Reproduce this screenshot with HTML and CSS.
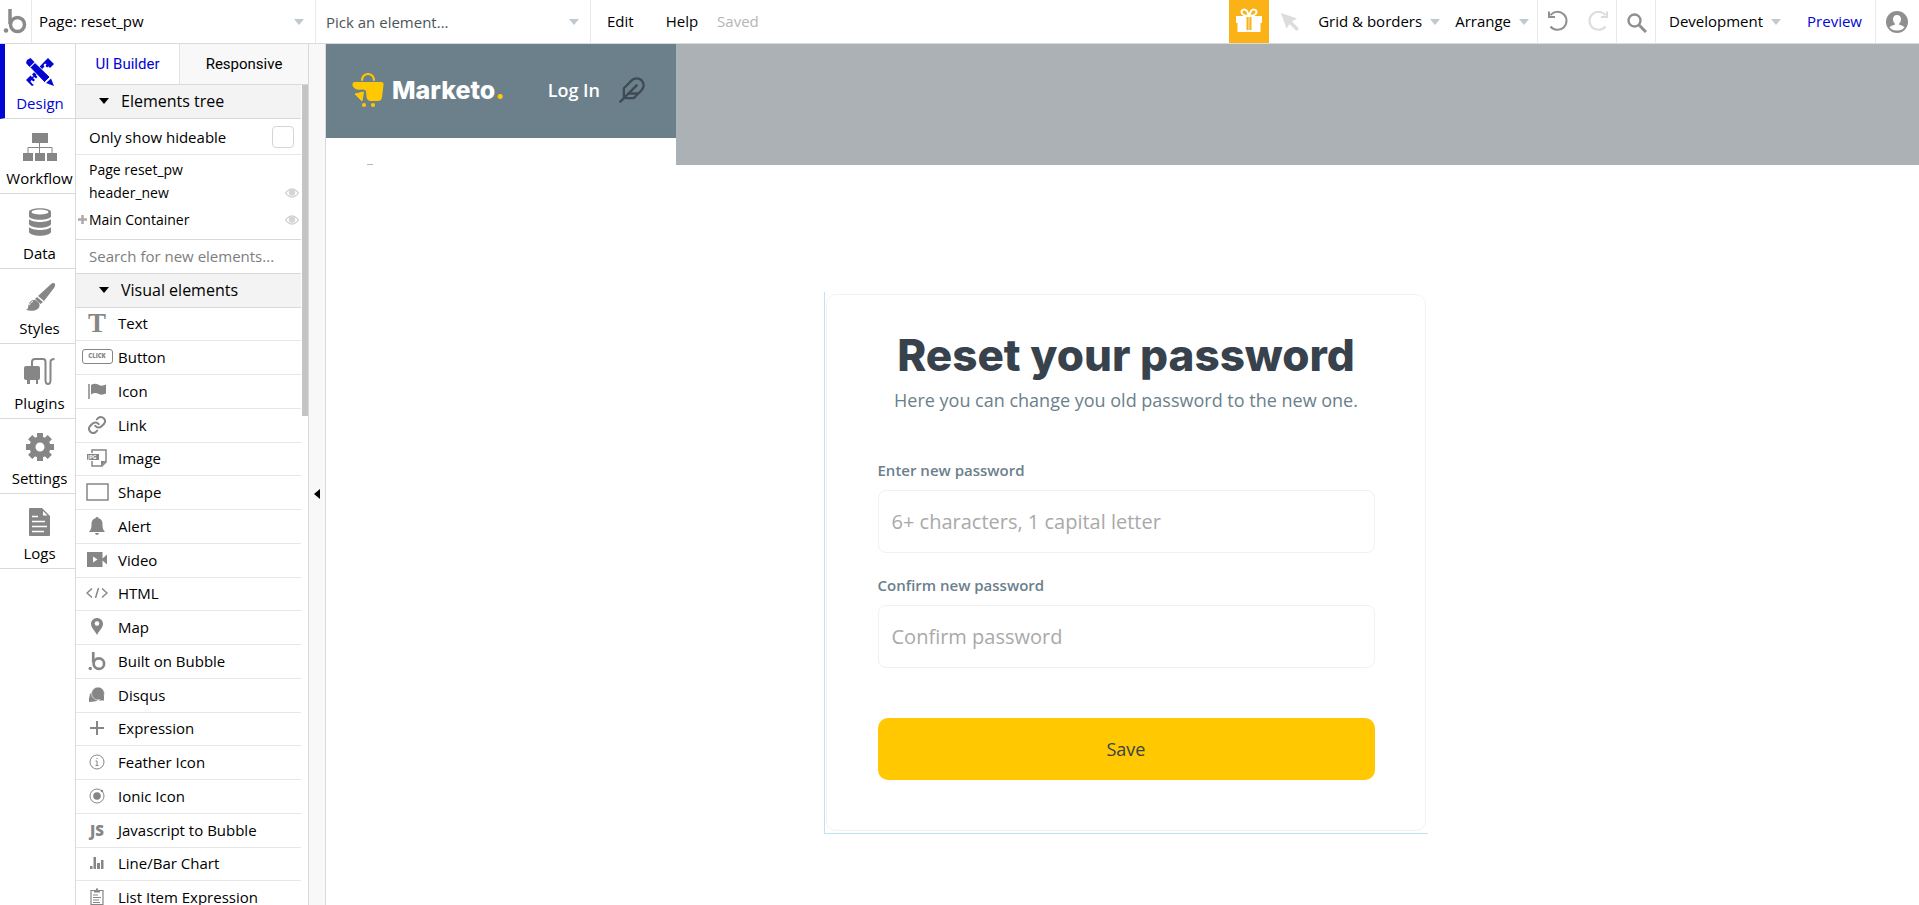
FILE: index.html
```html
<!DOCTYPE html>
<html lang="en">
<head>
    <meta charset="UTF-8">
    <meta name="viewport" content="width=device-width, initial-scale=1.0">
    <title>reset_pw | Bubble Editor</title>
    <link rel="stylesheet" href="styles.css">
</head>
<body>
    <header class="topbar">
        <a class="brand" href="#" aria-label="Home">
            <svg width="24" height="26" viewBox="0 0 24 26"><circle cx="3" cy="22.500" r="2.300" fill="#8a8a8a"/><path d="M7 1v15" stroke="#8a8a8a" stroke-width="3.500" fill="none"/><circle cx="14.500" cy="16.500" r="7" fill="none" stroke="#8a8a8a" stroke-width="3.500"/></svg>
        </a>
        <div class="picker page-picker">
            <select aria-label="Page"><option>Page: reset_pw</option></select>
        </div>
        <div class="picker element-picker">
            <select aria-label="Element"><option>Pick an element...</option></select>
        </div>
        <nav class="menu">
            <button type="button">Edit</button>
            <button type="button">Help</button>
            <span class="saved">Saved</span>
        </nav>
        <div class="tools">
            <button type="button" class="gift" aria-label="Gift">
                <svg width="26" height="24" viewBox="0 0 26 24"><path d="M0 8h26v7h-1.500v9H1.500v-9H0z" fill="#fff"/><path d="M13 8C9 8 5.500 6.500 5.500 4S9 .5 11 3l2 5 2-5c2-2.500 5.500-1.500 5.500 1S17 8 13 8z" fill="none" stroke="#fff" stroke-width="2"/><path d="M10.500 9h5v13h-5z" fill="#fbb216"/><path d="M12 8h2v15h-2z" fill="#fff" opacity=".35"/></svg>
            </button>
            <button type="button" class="pointer" aria-label="Pointer">
                <svg width="20" height="20" viewBox="0 0 20 20"><path d="M1 1l16 5.500-5 3L19 16.500 16.500 19 9.500 12 6.500 16.500z" fill="#dcdcdc"/></svg>
            </button>
            <button type="button" class="drop">Grid &amp; borders</button>
            <button type="button" class="drop">Arrange</button>
            <div class="history">
                <button type="button" aria-label="Undo">
                    <svg width="22" height="22" viewBox="0 0 22 22"><path d="M3.500 5.200A9 9 0 1 1 3.500 16.500" fill="none" stroke="#8f8f8f" stroke-width="2"/><path d="M2 1.500V7h6" fill="none" stroke="#8f8f8f" stroke-width="2"/></svg>
                </button>
                <button type="button" aria-label="Redo">
                    <svg width="22" height="22" viewBox="0 0 22 22"><path d="M18.500 5.200A9 9 0 1 0 18.500 16.500" fill="none" stroke="#dcdcdc" stroke-width="2"/><path d="M20 1.500V7h-6" fill="none" stroke="#dcdcdc" stroke-width="2"/></svg>
                </button>
            </div>
            <button type="button" class="search" aria-label="Search">
                <svg width="20" height="20" viewBox="0 0 20 20"><circle cx="7.500" cy="7.500" r="6" fill="none" stroke="#8f8f8f" stroke-width="2.400"/><path d="M12 12l7 7" stroke="#8f8f8f" stroke-width="3"/></svg>
            </button>
            <button type="button" class="drop version">Development</button>
            <a class="preview" href="#">Preview</a>
            <button type="button" class="account" aria-label="Account">
                <svg width="22" height="22" viewBox="0 0 22 22"><circle cx="11" cy="11" r="11" fill="#8f8f8f"/><path d="M11 4c2.600 0 4 1.800 4 4.200 0 1.800-.8 3.300-1.800 4.200v1.300c2.500.6 4.300 1.300 5.300 2.600A9 9 0 0 1 11 19.500a9 9 0 0 1-7.500-3.200c1-1.300 2.800-2 5.300-2.600v-1.300C7.800 11.500 7 10 7 8.200 7 5.800 8.400 4 11 4z" fill="#fff"/></svg>
            </button>
        </div>
    </header>

    <div class="workspace">
        <nav class="sidenav">
            <a href="#" class="active">
                <svg width="28" height="28" viewBox="0 0 28 28"><g fill="#0205d3"><path d="M22 0l6 6-4 4-1.500-1.500-1.500 1L19.500 8l1-1.500-1.500-1L17.500 7l1 1.500L10 17.500l1.500 1.500-1.500 1.500L8.500 19 7 20l2 2-1.500 1.500L5.500 22l-1 1.500L6.500 26l1.500 1-2 1L0 22l4.500-4.500L6 19l1.500-1L6 16.500 18 4z"/><path d="M4.500 0l4 4-5 5L0 5 1 2z"/><path d="M9 4.500L24 19l-5.500 5.500L4 9.500z" stroke="#fff"/><path d="M25 20.500l3 7.500-8-3z"/></g></svg>
                <span>Design</span>
            </a>
            <a href="#">
                <svg width="34" height="28" viewBox="0 0 34 28"><g fill="#868686"><path d="M9 0h16v10H9zM0 20h10v8H0zM12 20h10v8H12zM24 20h10v8H24z"/><path d="M16.500 10v10M5 20v-5.500h24V20" fill="none" stroke="#868686"/></g></svg>
                <span>Workflow</span>
            </a>
            <a href="#">
                <svg width="22" height="28" viewBox="0 0 22 28"><g fill="#868686"><path d="M0 4v4c0 5 22 5 22 0V4c0-5-22-5-22 0zM0 11v5c2 5 20 5 22 0v-5c-3 4-19 4-22 0zM0 19v5c2 5 20 5 22 0v-5c-3 4-19 4-22 0z"/></g><ellipse cx="11" cy="4" rx="8.500" ry="2.500" fill="#fff"/></svg>
                <span>Data</span>
            </a>
            <a href="#">
                <svg width="30" height="28" viewBox="0 0 30 28"><g fill="#868686"><path d="M29 0c2 1 1 3 0 5L19 18l-6-5L25 2c1.500-1.500 3-2.500 4-2zM12 14l6 5-2.500 2-5.500-5z"/><path d="M9 17c3 0 6 3 5.500 6C14 27 8 29 1 27c2-1 2-2 2.500-5 .5-3 3-5 5.500-5z"/></g><path d="M4.500 22c.5-2 2-3 3.500-3.500" stroke="#fff" fill="none"/></svg>
                <span>Styles</span>
            </a>
            <a href="#">
                <svg width="31" height="28" viewBox="0 0 31 28"><path d="M8 8V4q0-3 3-3h8q2.500 0 2.500 3v18q0 4 2.500 4t2.500-4V4q0-3 4-3" fill="none" stroke="#868686" stroke-width="2"/><path d="M2 8h12q2 0 2 2v10q0 2-2 2v4h-2v-4H6v4H3v-4q-3 0-3-2V10q0-2 2-2z" fill="#868686"/></svg>
                <span>Plugins</span>
            </a>
            <a href="#">
                <svg width="28" height="28" viewBox="0 0 28 28"><circle cx="14" cy="14" r="7.500" fill="none" stroke="#868686" stroke-width="6"/><g stroke="#868686" stroke-width="6"><path d="M14 0v5M14 23v5M0 14h5M23 14h5M4.200 4.200l3.500 3.500M20.300 20.300l3.500 3.500M4.200 23.800l3.500-3.500M20.300 7.700l3.500-3.500"/></g></svg>
                <span>Settings</span>
            </a>
            <a href="#">
                <svg width="21" height="28" viewBox="0 0 21 28"><path d="M1 0h12l8 8v19q0 1-1 1H1q-1 0-1-1V1q0-1 1-1z" fill="#868686"/><path d="M14 3v4.500h4.500z" fill="#fff"/><path d="M3 8.500h6M3 13.500h13M3 18.500h15M3 23.500h12" stroke="#fff" stroke-width="1.500"/></svg>
                <span>Logs</span>
            </a>
        </nav>

        <aside class="panel">
            <div class="tabs">
                <button type="button" class="tab active">UI Builder</button>
                <button type="button" class="tab">Responsive</button>
            </div>
            <div class="panel-scroll">
                <div class="panel-body">
                    <button type="button" class="section">Elements tree</button>
                    <div class="hideable">
                        <label for="hideable">Only show hideable</label>
                        <input type="checkbox" id="hideable">
                    </div>
                    <ul class="tree">
                        <li>Page reset_pw</li>
                        <li>header_new
                            <svg class="eye" width="14" height="10" viewBox="0 0 14 10"><path d="M.5 5Q7-3 13.500 5 7 13 .5 5z" fill="none" stroke="#d5d5d5" stroke-width="1.300"/><circle cx="7" cy="4.500" r="3.200" fill="#d5d5d5"/></svg>
                        </li>
                        <li class="parent">
                            <svg class="plus" width="9" height="9" viewBox="0 0 9 9"><path d="M4.500 0v9M0 4.500h9" stroke="#aaa" stroke-width="2.500"/></svg>
                            Main Container
                            <svg class="eye" width="14" height="10" viewBox="0 0 14 10"><path d="M.5 5Q7-3 13.500 5 7 13 .5 5z" fill="none" stroke="#d5d5d5" stroke-width="1.300"/><circle cx="7" cy="4.500" r="3.200" fill="#d5d5d5"/></svg>
                        </li>
                    </ul>
                    <input class="find" type="text" aria-label="Search for new elements" placeholder="Search for new elements...">
                    <button type="button" class="section">Visual elements</button>
                    <ul class="elements">
                        <li><span class="icon icon-t">T</span>Text</li>
                        <li><span class="icon"><span class="icon-click">CLICK</span></span>Button</li>
                        <li><span class="icon"><svg width="18" height="16" viewBox="0 0 18 16"><path d="M1 1v15" stroke="#868686" stroke-width="1.500"/><path d="M3 2q4-2.500 8 0 3 1.500 7-.5v9q-4 2-7 .5-4-2-8 .5z" fill="#868686"/></svg></span>Icon</li>
                        <li><span class="icon"><svg width="20" height="20" viewBox="0 0 24 24"><g fill="none" stroke="#868686" stroke-width="2.400" stroke-linecap="round"><path d="M10 13a5 5 0 0 0 7.500.5l3-3a5 5 0 0 0-7-7l-1.700 1.700"/><path d="M14 11a5 5 0 0 0-7.500-.5l-3 3a5 5 0 0 0 7 7l1.700-1.700"/></g></svg></span>Link</li>
                        <li><span class="icon"><svg width="20" height="18" viewBox="0 0 20 18"><path d="M5 4V1h14v12l-4 4H5v-5" fill="none" stroke="#868686" stroke-width="1.500"/><path d="M0 5h12v6H0zM14 12h5l-5 5z" fill="#868686"/><text x="1" y="10" class="jpg">JPG</text></svg></span>Image</li>
                        <li><span class="icon"><svg width="23" height="18" viewBox="0 0 23 18"><path d="M1 1h21v16H1z" fill="none" stroke="#868686" stroke-width="1.500"/></svg></span>Shape</li>
                        <li><span class="icon"><svg width="16" height="18" viewBox="0 0 16 18"><path d="M8 0q1.300 0 1.500 1.300C12.500 2 13.500 4.500 13.500 7c0 4 .5 5.500 2.500 8H0c2-2.500 2.500-4 2.500-8 0-2.500 1-5 4-5.700Q6.700 0 8 0zM6 16h4q-.5 2-2 2t-2-2z" fill="#868686"/></svg></span>Alert</li>
                        <li><span class="icon"><svg width="20" height="15" viewBox="0 0 20 15"><path d="M0 0h15.500v15H0zM15.500 6.500L20 2.500v10l-4.500-4z" fill="#868686"/><path d="M6 4.500v6l4.500-3z" fill="#fff"/></svg></span>Video</li>
                        <li><span class="icon"><svg width="22" height="12" viewBox="0 0 22 12"><path d="M6 1.500L1 6l5 4.500M16 1.500L21 6l-5 4.500M12.500 1l-3 10" fill="none" stroke="#868686" stroke-width="1.500"/></svg></span>HTML</li>
                        <li><span class="icon"><svg width="12" height="17" viewBox="0 0 12 17"><path d="M6 0a5.800 5.800 0 0 1 6 6c0 3.500-4 7-6 11-2-4-6-7.500-6-11a5.800 5.800 0 0 1 6-6z" fill="#868686"/><circle cx="6" cy="5.500" r="2.300" fill="#fff"/></svg></span>Map</li>
                        <li><span class="icon"><svg width="18" height="20" viewBox="0 0 24 26"><circle cx="3" cy="23" r="2.300" fill="#868686"/><path d="M7 1v14" stroke="#868686" stroke-width="3.600"/><circle cx="14.500" cy="16.500" r="7" fill="none" stroke="#868686" stroke-width="3.600"/></svg></span>Built on Bubble</li>
                        <li><span class="icon"><svg width="16" height="15" viewBox="0 0 16 15"><circle cx="5.500" cy="9.500" r="5" fill="#868686"/><path d="M0 15v-5l5 4.500z" fill="#868686"/><circle cx="9" cy="6.500" r="6.500" fill="#868686" stroke="#fff" stroke-width=".6"/><path d="M15 8v5.500h-5z" fill="#868686"/></svg></span>Disqus</li>
                        <li><span class="icon"><svg width="14" height="14" viewBox="0 0 14 14"><path d="M7 0v14M0 7h14" stroke="#868686" stroke-width="2"/></svg></span>Expression</li>
                        <li><span class="icon"><svg width="16" height="16" viewBox="0 0 16 16"><circle cx="8" cy="8" r="7" fill="none" stroke="#868686"/><path d="M6.500 7H8v4M6.500 11.500h3M7.500 4.500h1.200" fill="none" stroke="#868686"/></svg></span>Feather Icon</li>
                        <li><span class="icon"><svg width="16" height="16" viewBox="0 0 16 16"><circle cx="8" cy="8" r="7" fill="none" stroke="#868686"/><circle cx="8" cy="8" r="3.800" fill="#868686"/><circle cx="13" cy="3" r="1.200" fill="#868686"/></svg></span>Ionic Icon</li>
                        <li><span class="icon icon-js">JS</span>Javascript to Bubble</li>
                        <li><span class="icon"><svg width="14" height="12" viewBox="0 0 14 12"><path d="M0 9h2.500v3H0zM3.500 0H6v12H3.500zM7 6h3v6H7zM11 3h2.500v9H11z" fill="#868686"/></svg></span>Line/Bar Chart</li>
                        <li><span class="icon"><svg width="14" height="17" viewBox="0 0 14 17"><path d="M4 2.500H1v14h12v-14h-3" fill="none" stroke="#868686" stroke-width="1.200"/><path d="M4 4.500V2h2q0-2 1-2t1 2h2v2.500zM3 6.500h5v1H3zM3 9h8v1H3zM3 11.500h6v1H3zM3 14h7v1H3z" fill="#868686"/></svg></span>List Item Expression</li>
                    </ul>
                </div>
                <div class="thumb"></div>
            </div>
        </aside>

        <button type="button" class="collapse" aria-label="Collapse panel"></button>

        <main class="canvas">
            <div class="page-header">
                <div class="header-new">
                    <div class="header-bar">
                        <a class="logo" href="#">
                            <svg width="32" height="36" viewBox="0 0 32 36"><path d="M10 8a6 6 0 0 1 12 0" fill="none" stroke="#ffc800" stroke-width="2.200" stroke-linecap="round"/><path d="M3 10h26q3 0 2.500 3L30 25q-.5 4-4 4h-7q-4 0-4.500-4L14 19q-1-2-4-1.500-8 1-9.500-4Q0 10 3 10z" fill="#ffc800"/><path d="M3 22l8.500-2-1.500 9-3-3z" fill="#ffc800" stroke="#ffc800" stroke-linejoin="round"/><circle cx="12" cy="33" r="2" fill="#ffc800"/><circle cx="21" cy="33" r="2" fill="#ffc800"/></svg>
                            <span class="logo-text">Marketo<b>.</b></span>
                        </a>
                        <a class="login" href="#">Log In</a>
                        <svg class="feather" width="28" height="28" viewBox="0 0 24 24"><path d="M20.240 12.240a6 6 0 0 0-8.490-8.490L5 10.500V19h8.500zM16 8L2 22M17.500 15H9"/></svg>
                    </div>
                    <div class="header-rest"></div>
                </div>
            </div>

            <div class="main-container">
                <form class="card">
                    <h1>Reset your password</h1>
                    <p>Here you can change you old password to the new one.</p>
                    <div class="form-group">
                        <label for="newPassword">Enter new password</label>
                        <input type="password" id="newPassword" placeholder="6+ characters, 1 capital letter">
                    </div>
                    <div class="form-group">
                        <label for="confirmPassword">Confirm new password</label>
                        <input type="password" id="confirmPassword" placeholder="Confirm password">
                    </div>
                    <button type="submit" class="save">Save</button>
                </form>
            </div>
        </main>
    </div>
</body>
</html>
```
FILE: styles.css
```css
* {
    box-sizing: border-box;
}
body {
    margin: 0;
    height: 100vh;
    display: flex;
    flex-direction: column;
    overflow: hidden;
    font-family: "Open Sans", sans-serif;
    font-size: 15px;
    color: #000;
    background: #fff;
}
button,
input,
select {
    font: inherit;
    color: inherit;
}
button {
    background: none;
    border: none;
    padding: 0;
    cursor: pointer;
}
a {
    color: inherit;
    text-decoration: none;
}
ul {
    list-style: none;
    margin: 0;
    padding: 0;
}
svg {
    display: block;
    flex: none;
}

/* top bar */
.topbar {
    display: flex;
    flex: none;
    height: 44px;
    border-bottom: 1px solid #d9dcdc;
}
.brand {
    width: 32px;
    padding: 8px 0 0 3px;
    border-right: 1px solid #e8ebec;
}
.picker {
    position: relative;
    border-right: 1px solid #e8ebec;
}
.picker select {
    appearance: none;
    width: 100%;
    height: 100%;
    border: none;
    background: none;
    padding: 0 30px 2px 7px;
}
.page-picker {
    width: 284px;
}
.element-picker {
    width: 275px;
}
.element-picker select {
    padding-left: 10px;
    padding-bottom: 0;
    color: #4b5559;
}
.picker::after {
    content: "";
    position: absolute;
    right: 11px;
    top: 19px;
    border: 5px solid transparent;
    border-top: 6px solid #bfc9d0;
    border-bottom: none;
}
.menu {
    display: flex;
    align-items: center;
    gap: 32px;
    padding: 0 0 2px 16px;
}
.saved {
    color: #b5b5b5;
    margin-left: -13px;
}
.tools {
    display: flex;
    margin-left: auto;
}
.tools button,
.preview {
    display: flex;
    align-items: center;
}
.tools .gift {
    width: 40px;
    justify-content: center;
    padding-bottom: 3px;
    background: #fbb216;
}
.tools .pointer {
    padding: 0 18px 0 11px;
}
.drop::after {
    content: "";
    margin: 2px 0 0 8px;
    border: 5px solid transparent;
    border-top: 6px solid #bfc9d0;
    border-bottom: none;
}
.tools .drop {
    padding: 0 15px 2px 0;
}
.tools .drop + .drop {
    padding-right: 8px;
}
.history {
    display: flex;
    gap: 18px;
    padding: 0 7px 2px 9px;
    border-left: 1px solid #e8ebec;
    border-right: 1px solid #e8ebec;
}
.tools .search {
    padding: 2px 8px 0 10px;
    border-right: 1px solid #e8ebec;
}
.tools .version {
    padding: 0 26px 2px 13px;
}
.preview {
    color: #0205d3;
    padding: 0 13px 2px 0;
}
.tools .account {
    padding: 0 11px 0 10px;
    border-left: 1px solid #e8ebec;
}

.workspace {
    display: flex;
    flex: 1;
    min-height: 0;
}

/* left navigation */
.sidenav {
    flex: none;
    width: 76px;
    border-right: 1px solid #d9d9d9;
}
.sidenav a {
    display: flex;
    flex-direction: column;
    align-items: center;
    gap: 6px;
    height: 75px;
    padding: 14px 0 0 4px;
    border-bottom: 1px solid #d9d9d9;
    line-height: 22px;
}
.sidenav a.active {
    color: #0205d3;
    padding-left: 0;
    border-left: 5px solid #0205d3;
}

/* elements panel */
.panel {
    flex: none;
    display: flex;
    flex-direction: column;
    width: 233px;
    border-right: 1px solid #d9d9d9;
}
.tabs {
    display: flex;
    flex: none;
    height: 41px;
    border-bottom: 1px solid #d9d9d9;
}
.tab {
    flex: 1;
    background: #f8f8f8;
    font-family: Roboto, sans-serif;
}
.tab.active {
    flex: none;
    width: 104px;
    color: #0205d3;
    background: #fff;
    border-right: 1px solid #e3e3e3;
}
.panel-scroll {
    display: flex;
    flex: 1;
    min-height: 0;
    overflow: hidden;
}
.panel-body {
    flex: 1;
}
.thumb {
    width: 6px;
    height: 331px;
    margin-left: 1px;
    background: #c4c4c4;
}
.section {
    display: flex;
    align-items: center;
    width: 100%;
    height: 34px;
    padding-bottom: 2px;
    background: #f3f3f3;
    border-bottom: 1px solid #d9d9d9;
    font-size: 16px;
}
.section::before {
    content: "";
    margin: 0 12px 0 23px;
    border: 5px solid transparent;
    border-top: 6px solid #000;
    border-bottom: none;
}
.hideable {
    display: flex;
    align-items: center;
    justify-content: space-between;
    height: 36px;
    padding: 0 7px 0 13px;
    border-bottom: 1px solid #e6e6e6;
}
.hideable input {
    appearance: none;
    width: 22px;
    height: 22px;
    margin: 0;
    border: 1px solid #d5d5d5;
    border-radius: 4px;
}
.tree {
    padding: 3px 0 4px;
    border-bottom: 1px solid #d9d9d9;
    font-size: 14px;
}
.tree li {
    position: relative;
    display: flex;
    align-items: center;
    height: 23px;
    padding: 0 2px 0 13px;
}
.tree .parent {
    height: 31px;
    gap: 2px;
    padding-left: 2px;
}
.eye {
    margin-left: auto;
}
.find {
    display: block;
    width: 100%;
    height: 34px;
    border: none;
    border-bottom: 1px solid #d9d9d9;
    padding: 0 13px 2px;
}
.find::placeholder {
    color: #7d7d7d;
}
.elements li {
    display: flex;
    align-items: center;
    height: 34px;
    padding-bottom: 2px;
    border-bottom: 1px solid #e6e6e6;
    white-space: nowrap;
}
.elements li:nth-child(4n+1) {
    height: 33px;
}
.icon {
    display: flex;
    justify-content: center;
    width: 42px;
    color: #868686;
}
.icon-t {
    font: 700 27px/24px "Liberation Serif", serif;
}
.icon-click {
    width: 31px;
    border: 1px solid #868686;
    border-radius: 3px;
    font-size: 6px;
    font-weight: 800;
    line-height: 13px;
    text-align: center;
}
.icon-js {
    font-weight: 800;
}
.jpg {
    fill: #fff;
    font-size: 5px;
    font-weight: 700;
}
.collapse {
    display: flex;
    flex: none;
    align-items: center;
    width: 17px;
    padding: 0 0 0 5px;
    background: #f8f8f8;
    border-right: 1px solid #d9d9d9;
}
.collapse::before {
    content: "";
    margin-top: 38px;
    border: 5px solid transparent;
    border-right: 6px solid #000;
    border-left: none;
}

/* page being edited */
.canvas {
    flex: 1;
    min-width: 0;
}
.page-header {
    height: 121px;
    background: #acb1b5;
}
.header-new {
    width: 350px;
    height: 100%;
    background: #fff;
}
.header-bar {
    display: flex;
    align-items: center;
    height: 94px;
    padding: 0 30px 3px 26px;
    background: #6b808b;
}
.logo {
    display: flex;
    align-items: center;
    gap: 8px;
}
.logo-text {
    color: #fff;
    font: 800 25px/32px Inter, sans-serif;
}
.logo-text b {
    color: #ffc800;
}
.login {
    margin-left: auto;
    color: #fff;
    font-size: 18px;
    font-weight: 600;
}
.feather {
    margin-left: 18px;
    fill: none;
    stroke: #3f4b54;
    stroke-width: 2;
    stroke-linecap: round;
    stroke-linejoin: round;
}
.header-rest {
    width: 6px;
    height: 27px;
    margin-left: 41px;
    border-bottom: 1px solid #b5b9bc;
}
.main-container {
    width: 604px;
    margin: 127px auto 0;
    padding: 2px 2px 2px 1px;
    position: relative;
    left: 3px;
    border-left: 1px solid #bfe3f2;
    border-bottom: 1px solid #bfe3f2;
}
.card {
    padding: 37px 50px 50px 51px;
    border: 1px solid #f2f3f4;
    border-radius: 10px;
}
.card h1 {
    margin: 0;
    color: #37424c;
    font: 800 44px/46px Inter, sans-serif;
    text-align: center;
    white-space: nowrap;
}
.card p {
    margin: 8px 0 44px;
    color: #6b808b;
    font-size: 18px;
    line-height: 28px;
    text-align: center;
}
.form-group {
    margin-bottom: 20px;
}
.form-group label {
    display: block;
    margin-bottom: 8px;
    color: #6b808b;
    font-weight: 600;
    line-height: 24px;
}
.form-group input {
    display: block;
    width: 100%;
    height: 63px;
    padding: 0 13px;
    border: 1px solid #eff1f3;
    border-radius: 8px;
    background: #fff;
    font-size: 20px;
}
.form-group input::placeholder {
    color: #a9a9a9;
}
.save {
    width: 100%;
    height: 62px;
    margin-top: 30px;
    border-radius: 10px;
    background: #ffc800;
    color: #37424c;
    font-size: 18px;
}
```
